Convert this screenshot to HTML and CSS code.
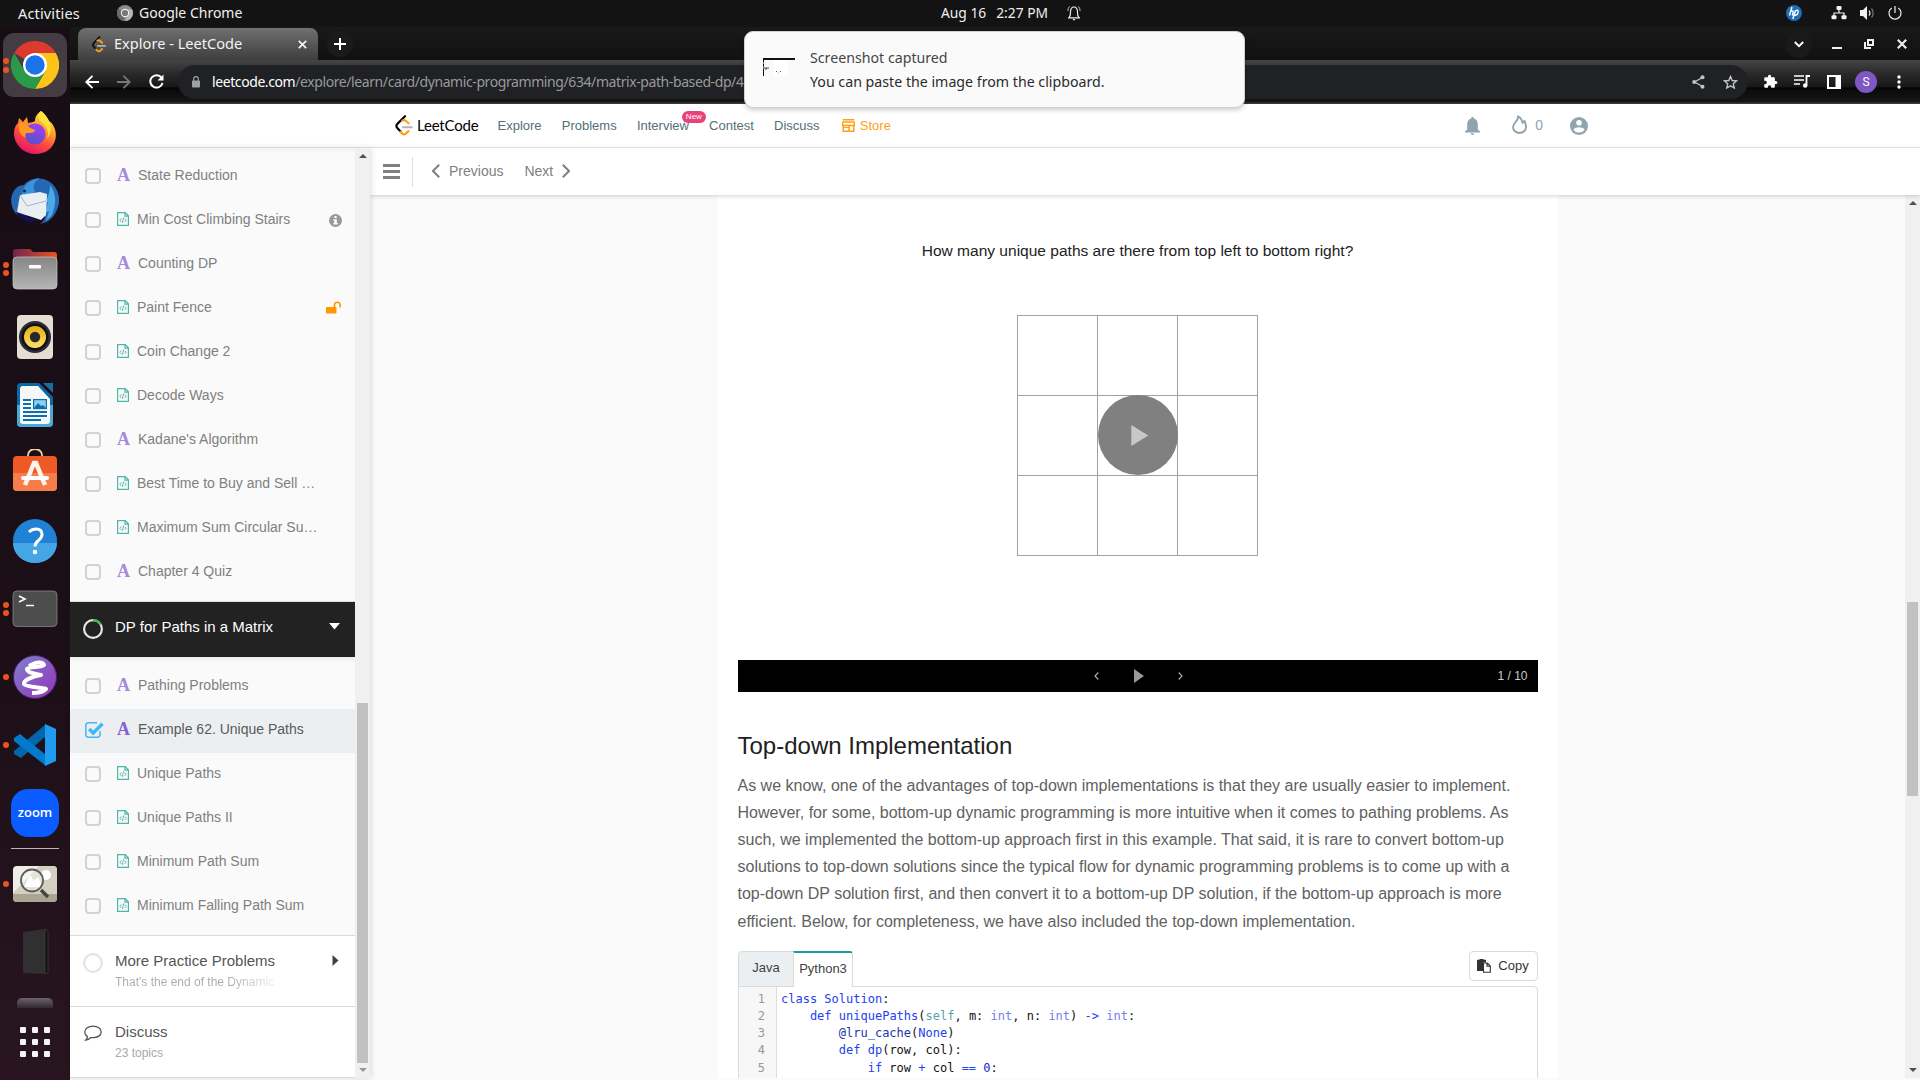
FILE: index.html
```html
<!DOCTYPE html>
<html lang="en">
<head>
<meta charset="utf-8">
<title>Explore - LeetCode</title>
<link rel="stylesheet" href="styles.css">
</head>
<body>
<svg class="defs" width="0" height="0">
  <defs>
    <symbol id="doc" viewBox="0 0 12 14"><path d="M.6.6h7.6l3.2 3.2v9.6H.6z M8 .8v3.4h3.2" fill="none" stroke="#4db6ac" stroke-width="1.2"/><path d="M4.400 6.400 2.800 8.200l1.600 1.800M7.600 6.400l1.600 1.800-1.600 1.800M6.600 5.400 5.400 11" fill="none" stroke="#4db6ac" stroke-width=".9"/></symbol>
  </defs>
</svg>
<header class="topbar">
  <div class="topbar-left">
    <span class="activities">Activities</span>
    <svg width="16" height="16" viewBox="0 0 16 16"><circle cx="8" cy="8" r="8" fill="#8b8b8b"/><path d="M8 8 1 4A8 8 0 0 0 7 16z" fill="#686868"/><path d="M8 4.2h7A8 8 0 0 1 8 16l3-6z" fill="#b5b5b5"/><circle cx="8" cy="8" r="4.2" fill="#eee"/><circle cx="8" cy="8" r="3.1" fill="#777"/></svg>
    <span class="appname">Google Chrome</span>
  </div>
  <div class="clock"><span>Aug 16</span><span>2:27 PM</span>
    <svg width="14" height="16" viewBox="0 0 14 16"><path d="M2.2 12.4c1.3-1.2 1.3-2.6 1.3-5.2C3.500 4 4.700 2 7 2s3.500 2 3.500 5.200c0 2.600 0 4 1.300 5.200M1 12.800h12" fill="none" stroke="#eee" stroke-width="1.200"/><path d="M5.500 14h3L7 15.800z" fill="#eee"/><path d="M2.600 1.400C1.400 2.600 1 4 1 6M11.400 1.400C12.600 2.600 13 4 13 6" fill="none" stroke="#ccc" stroke-width="1"/></svg>
  </div>
  <div class="tray">
    <svg class="t-hp" width="16" height="16" viewBox="0 0 16 16"><circle cx="8" cy="8" r="8" fill="#1d6fb5"/><path d="M6 2 3.400 10.500M4.800 6.500c2-1.200 2.800-.6 2.300 1L6.200 10.500M9.500 5.500 6.800 14M9.300 6c2.400-1.400 3.400-.8 2.700 1.600-.6 2.200-1.500 3-3.700 2.600" fill="none" stroke="#fff" stroke-width="1.400"/></svg>
    <svg class="t-net" width="16" height="14" viewBox="0 0 16 14"><path d="M8 3v4M3 10V7h10v3" fill="none" stroke="#f2f2f2" stroke-width="1.200"/><rect x="5.500" y="0" width="5" height="4" rx="1" fill="#f2f2f2"/><rect x=".5" y="9.200" width="5" height="4" rx="1" fill="#f2f2f2"/><rect x="10.500" y="9.200" width="5" height="4" rx="1" fill="#f2f2f2"/></svg>
    <svg class="t-vol" width="15" height="14" viewBox="0 0 15 14"><path d="M0 4h3l4-4v14L3 10H0z" fill="#f2f2f2"/><path d="M9 4.500c1.200 1.500 1.200 3.500 0 5" fill="none" stroke="#f2f2f2" stroke-width="1.200"/><path d="M11.500 2.500c2.200 2.500 2.200 6.500 0 9" fill="none" stroke="#777" stroke-width="1.200"/></svg>
    <svg class="t-pow" width="14" height="14" viewBox="0 0 14 14"><path d="M3.800 2A6 6 0 1 0 10.200 2M7 0v7" fill="none" stroke="#eee" stroke-width="1.200"/></svg>
  </div>
</header>
<div class="desktop">
  <nav class="dock">
    <div class="cell on two"><svg width="48" height="48" viewBox="0 0 48 48"><path d="M24 24 3.200 12A24 24 0 0 1 44.800 12z" fill="#dc3a2e"/><path d="M24 12h20.800A24 24 0 0 1 24 48l10.400-18z" fill="#fcc419"/><path d="M13.600 30 3.200 12A24 24 0 0 0 24 48l10.400-18z" fill="#2b9a48"/><circle cx="24" cy="24" r="12" fill="#fff"/><circle cx="24" cy="24" r="9.700" fill="#1a73e8"/></svg></div>
    <div class="cell"><svg width="48" height="48" viewBox="0 0 48 48"><defs><linearGradient id="ff" x1=".8" y1="0" x2=".3" y2="1"><stop offset="0" stop-color="#fff44f"/><stop offset=".35" stop-color="#ffa52a"/><stop offset=".65" stop-color="#ff4a3c"/><stop offset="1" stop-color="#e3116e"/></linearGradient><linearGradient id="ff2" x1=".7" y1="0" x2=".3" y2="1"><stop offset="0" stop-color="#a43df5"/><stop offset="1" stop-color="#5552c8"/></linearGradient></defs><path d="M30 2c4 3 6 6 8 10 5 3 8 11 6.500 18C42 40 34 45 24 45S4 37 3 26c0-6 1-9 4-12l1-5 4 4 4-5 1 6c5-1 6-1 7-2 0-5 3-8 6-10z" fill="url(#ff)"/><circle cx="24" cy="25" r="10.500" fill="url(#ff2)"/><path d="M8 15c6-3 9 4 16 6 0 3-5 3-8 3-2 0-2 3-1 5-5-2-8-7-7-14z" fill="#ff9a22"/><path d="M30 2c-3 3-3 7-1 10 6 4 10 9 7 18 5-6 4-13 2-18-2-4-4-7-8-10z" fill="#ffe23c"/></svg></div>
    <div class="cell"><svg width="48" height="48" viewBox="0 0 48 48"><path d="M13 8C18 1 30-1 39 5c8 6 11 16 8 25-3 10-9 15-18 17 4-3 5-5 5-8L6 38C-3 28-1 14 8 9z" fill="#2467b3"/><path d="M12 13c3-8 10-11 17-12-8 5-7 10-5 14l-9 5-5 2z" fill="#3b93dc"/><path d="M39 8c6 8 7 18 2 30l-6 6 3-10-4 2 3-11-4 2c4-6 6-12 6-19z" fill="#4da8e6"/><path d="m9 18 20-3 7 2-1 21-5 5L6 35z" fill="#e9eef3"/><path d="m9 18 7 11 19-5" fill="none" stroke="#a9b3bf"/><path d="m5 35 22 8-7 3L7 40z" fill="#16104c"/><circle cx="13.500" cy="14" r="1.500" fill="#072b54"/></svg></div>
    <div class="cell two"><svg width="48" height="48" viewBox="0 0 48 48"><defs><linearGradient id="fo"><stop offset="0" stop-color="#6f2450"/><stop offset="1" stop-color="#e95420"/></linearGradient><linearGradient id="gr" x2="0" y2="1"><stop offset="0" stop-color="#858585"/><stop offset="1" stop-color="#b5b5b5"/></linearGradient></defs><path d="M2 15V7q0-3 3-3h13q2 0 4 3h21q3 0 3 3v10H2z" fill="url(#fo)"/><rect x="2" y="12" width="44" height="32" rx="4" fill="url(#gr)" stroke="#c8c8c8" stroke-width=".7"/><rect x="18" y="20" width="12" height="3.500" rx="1" fill="#fff"/></svg></div>
    <div class="cell"><svg width="48" height="48" viewBox="0 0 48 48"><defs><linearGradient id="sp" x2="0" y2="1"><stop offset="0" stop-color="#e6ae13"/><stop offset="1" stop-color="#ffe268"/></linearGradient></defs><rect x="6" y="2" width="36" height="44" rx="4" fill="#e3ddd2"/><circle cx="24" cy="24" r="16" fill="#2b2c36"/><circle cx="24" cy="24" r="13.500" fill="#111"/><circle cx="24" cy="24" r="11" fill="url(#sp)"/><circle cx="24" cy="24" r="5.200" fill="#28292c"/></svg></div>
    <div class="cell"><svg width="48" height="48" viewBox="0 0 48 48"><path d="M10 2h18l14 14v26q0 4-4 4H10q-4 0-4-4V6q0-4 4-4z" fill="#0c669f"/><path d="M6 24h36v18q0 4-4 4H10q-4 0-4-4z" fill="#4ba9d6"/><path d="M32 2h10v10z" fill="#176d9f"/><path d="M12 5h15l12 13v22q0 3-3 3H12q-3 0-3-3V8q0-3 3-3z" fill="#f7f8fa"/><path d="M12 19h8M12 23h8M12 27h8M12 31h24M12 35h24M12 39h18" stroke="#0b70ab" stroke-width="2.200"/><rect x="22.600" y="18.600" width="12.800" height="9" fill="#90cef1" stroke="#0b70ab" stroke-width="1.200"/><path d="m23 27 4-5 3 3 2-1 3 3z" fill="#0b70ab"/></svg></div>
    <div class="cell"><svg width="48" height="48" viewBox="0 0 48 48"><path d="M17 9V6a7 6 0 0 1 14 0v3" fill="none" stroke="#efd2a1" stroke-width="1.800"/><rect x="2" y="7" width="44" height="35" rx="4" fill="#ee5a25"/><path d="M2 24h44v14q0 4-4 4H6q-4 0-4-4z" fill="#f47d4a"/><path d="m14 36 9-22h2l9 22" fill="none" stroke="#fff3ec" stroke-width="4.500"/><path d="M12 29h24" stroke="#fff" stroke-width="4" stroke-linecap="round"/></svg></div>
    <div class="cell"><svg width="48" height="48" viewBox="0 0 48 48"><circle cx="24" cy="24" r="22" fill="#1f82d4"/><path d="M2 26a22 20 0 0 0 44 0z" fill="#45a5e5"/><path d="M18 15q3-3 7-3c4 0 6 2 6 5.500 0 6-7 5.500-7 12" fill="none" stroke="#fff" stroke-width="3"/><circle cx="24" cy="35" r="2.300" fill="#fff"/></svg></div>
    <div class="cell two"><svg width="48" height="48" viewBox="0 0 48 48"><rect x="2" y="6" width="44" height="35.500" rx="4" fill="#4d4d4d" stroke="#858585" stroke-width=".8"/><path d="m8 11 6 3-6 3M15 20.500h8" fill="none" stroke="#fff" stroke-width="1.600"/></svg></div>
    <div class="cell one"><svg width="48" height="48" viewBox="0 0 48 48"><defs><linearGradient id="em" x2="1" y2="1"><stop offset="0" stop-color="#8080cf"/><stop offset="1" stop-color="#9334b6"/></linearGradient></defs><circle cx="24" cy="24" r="21.500" fill="url(#em)" stroke="#492063"/><path d="M18 13c8-5 14-4 15-1-2 3-16 1-17 4 0 4 10 5 14 6-7 1-18 5-17 9 1 3 21 4 22 5-3 3-9 4-14 4" fill="none" stroke="#fff" stroke-width="4" stroke-linejoin="round"/></svg></div>
    <div class="cell one"><svg width="48" height="48" viewBox="0 0 48 48"><path d="m3 33 7 4 25-22V3L3 30z" fill="#0065a9"/><path d="m3 17 6-4 26 21v11L3 20z" fill="#007acc"/><path d="M34 3l11 5v32l-11 5z" fill="#1f9cf0"/></svg></div>
    <div class="cell"><div class="zoomapp">zoom</div></div>
    <div class="dock-sep"></div>
    <div class="cell one"><svg width="48" height="48" viewBox="0 0 48 48"><rect x="2" y="6" width="44" height="36" rx="4" fill="#efeee6"/><path d="M2 33 28 6h14q4 0 4 4v24H2z" fill="#d2d0c1"/><path d="M2 34h44v4q0 4-4 4H6q-4 0-4-4z" fill="#aaa493"/><circle cx="35" cy="15" r="5" fill="#fff"/><path d="m13 27 6-12 4 6 4-4 5 10z" fill="#fff"/><circle cx="21" cy="20.500" r="11" fill="#fff" fill-opacity=".4" stroke="#5c5c5c" stroke-width="1.800"/><path d="m30 30 7 7" stroke="#444" stroke-width="3.500"/></svg></div>
    <div class="cell"><svg width="48" height="48" viewBox="0 0 48 48"><path d="m12 4 22-3v45l-22-1z" fill="#303030"/><path d="m34 1 3 2v42l-3 1z" fill="#111" stroke="#444" stroke-width=".7"/></svg></div>
    <div class="half-icon"></div>
    <div class="apps"><i></i><i></i><i></i><i></i><i></i><i></i><i></i><i></i><i></i></div>
  </nav>
  <div class="window">
    <div class="tabstrip">
      <div class="tab">
        <svg width="14" height="17" viewBox="0 0 18 21"><path d="M9.500 1 2.500 8.500q-2.500 2.500 0 5l3 3.200" fill="none" stroke="#111" stroke-width="2.400" stroke-linecap="round"/><path d="m7 5.500q2-1 3.500.5L13 8.300M5.500 17l1.300 1.400q2 1.600 4 0L13 16.200" fill="none" stroke="#ffa116" stroke-width="2.400" stroke-linecap="round"/><path d="M7.500 12.300H17" stroke="#b3b3b3" stroke-width="2" stroke-linecap="round"/></svg>
        <span>Explore - LeetCode</span>
        <svg width="9" height="9" viewBox="0 0 9 9"><path d="m.8.8 7.400 7.400M8.200.8.800 8.200" stroke="#f4f4f4" stroke-width="1.700"/></svg>
      </div>
      <div class="plus"><svg width="12" height="12" viewBox="0 0 12 12"><path d="M6 0v12M0 6h12" stroke="#fff" stroke-width="2"/></svg></div>
      <div class="winbtns">
        <div class="chev"><svg width="10" height="7" viewBox="0 0 10 7"><path d="m.8 1 4.200 4.200L9.200 1" fill="none" stroke="#fff" stroke-width="1.800"/></svg></div>
        <svg class="w-min" width="10" height="10" viewBox="0 0 10 10"><path d="M0 9h10" stroke="#eee" stroke-width="2"/></svg>
        <svg class="w-max" width="10" height="10" viewBox="0 0 10 10"><path d="M4 1h5v5H4zM1 3v6h6" fill="none" stroke="#eee" stroke-width="2"/></svg>
        <svg class="w-close" width="10" height="10" viewBox="0 0 10 10"><path d="m.8.8 8.400 8.400M9.200.8.800 9.200" stroke="#eee" stroke-width="2.200"/></svg>
      </div>
    </div>
    <div class="toolbar">
      <svg class="b-back" width="14" height="14" viewBox="0 0 14 14"><path d="M7.500.8 1.300 7l6.200 6.200M1.300 7H14" fill="none" stroke="#fff" stroke-width="1.900"/></svg>
      <svg class="b-fwd" width="14" height="14" viewBox="0 0 14 14"><path d="M6.500.8 12.700 7l-6.200 6.200M12.700 7H0" fill="none" stroke="#777" stroke-width="1.900"/></svg>
      <svg class="b-rel" width="15" height="15" viewBox="0 0 15 15"><path d="M12.500 3.700A6.200 6.200 0 1 0 13.500 9" fill="none" stroke="#fff" stroke-width="2"/><path d="M14.500.5v6h-6z" fill="#fff"/></svg>
      <div class="omnibox">
        <svg width="8" height="12" viewBox="0 0 8 12"><rect y="4.500" width="8" height="7" rx=".8" fill="#9aa0a6"/><path d="M1.700 5V3a2.300 2.300 0 0 1 4.600 0v2" fill="none" stroke="#9aa0a6" stroke-width="1.200"/></svg>
        <span class="url"><b>leetcode.com</b>/explore/learn/card/dynamic-programming/634/matrix-path-based-dp/4</span>
        <svg class="o-share" width="13" height="14" viewBox="0 0 13 14"><path d="m10.500 2.500-8 4.500 8 4.500" fill="none" stroke="#c4c4c4" stroke-width="1.300"/><circle cx="10.500" cy="2.300" r="2" fill="#c4c4c4"/><circle cx="2.200" cy="7" r="2" fill="#c4c4c4"/><circle cx="10.500" cy="11.700" r="2" fill="#c4c4c4"/></svg>
        <svg width="15" height="14" viewBox="0 0 15 14"><path d="m7.500 1.500 1.700 4 4.400.4-3.300 2.900 1 4.200-3.800-2.200L3.700 13l1-4.200L1.400 5.900l4.400-.4z" fill="none" stroke="#c4c4c4" stroke-width="1.400"/></svg>
      </div>
      <svg class="x-puz" width="15" height="15" viewBox="0 0 24 24"><path d="M20.500 11H19V7c0-1.100-.9-2-2-2h-4V3.500a2.500 2.500 0 0 0-5 0V5H4c-1.100 0-2 .9-2 2v3.800h1.500a2.700 2.700 0 0 1 0 5.400H2V20c0 1.100.9 2 2 2h3.800v-1.500a2.700 2.700 0 0 1 5.400 0V22H17c1.100 0 2-.9 2-2v-4h1.500a2.500 2.500 0 0 0 0-5z" fill="#fff"/></svg>
      <svg class="x-que" width="16" height="13" viewBox="0 0 16 13"><path d="M0 1h10M0 5h10M0 9h6" stroke="#fff" stroke-width="1.700"/><path d="M12.500 10.500V1H16" fill="none" stroke="#fff" stroke-width="1.800"/><circle cx="11.200" cy="10.500" r="2.200" fill="#fff"/></svg>
      <svg class="x-pan" width="14" height="14" viewBox="0 0 14 14"><path d="M0 0h14v14H0zM2 2v10h6.500V2z" fill="#fff" fill-rule="evenodd"/></svg>
      <span class="avatar">S</span>
      <svg class="x-dot" width="4" height="14" viewBox="0 0 4 14"><circle cx="2" cy="2" r="1.700" fill="#fff"/><circle cx="2" cy="7" r="1.700" fill="#fff"/><circle cx="2" cy="12" r="1.700" fill="#fff"/></svg>
    </div>
    <div class="page">
      <header class="site">
        <svg class="logo" width="18" height="21" viewBox="0 0 18 21"><path d="M10 1.200 2.500 8.800q-2.200 2.200 0 4.400l3.300 3.600" fill="none" stroke="#000" stroke-width="2.200" stroke-linecap="round"/><path d="M7.500 5.500q2-1 3.500.5l2.500 2.300M5.500 16.800l1.500 1.600q2 1.800 4 0l2.500-2.200" fill="none" stroke="#ffa116" stroke-width="2.200" stroke-linecap="round"/><path d="M8 12.300h8.800" stroke="#b3b3b3" stroke-width="1.900" stroke-linecap="round"/></svg>
        <span class="wordmark">LeetCode</span>
        <nav class="menu">
          <a>Explore</a><a>Problems</a><a class="iv">Interview<em>New</em></a><a>Contest</a><a>Discuss</a>
          <a class="store"><svg width="13" height="13" viewBox="0 0 13 13"><path d="M.8.8h11.400M1 3h11l.5 3.600H.5zM1.200 6.500v5.700h10.600V6.500M7 6.500v5.500" fill="none" stroke="#ffa116" stroke-width="1.500"/><path d="M1 8.500h6" stroke="#ffa116"/></svg>Store</a>
        </nav>
        <div class="user">
          <svg class="u-bell" width="15" height="18" viewBox="0 0 15 18"><path d="M7.500 0c.8 0 1.300.5 1.300 1.400C11.500 2 12.800 4.200 12.800 7v5.500L15 14.500v1H0v-1l2.200-2V7c0-2.800 1.300-5 4-5.600C6.200.5 6.700 0 7.500 0zM5.800 16.300h3.400a1.700 1.700 0 0 1-3.400 0z" fill="#90a4ae"/></svg>
          <svg class="u-fire" width="15" height="19" viewBox="0 0 15 19"><path d="M6 1.300c.3 2.500-.8 4-2.500 5.800C2 8.800 1 10.200 1 12.200 1 15.500 4 18 7.500 18s6.500-2.500 6.500-6c0-2.500-.8-4.500-1.600-6.300-.4 1.200-1 1.800-2 2C10 4.600 8.500 2.600 6 1.300z" fill="none" stroke="#90a4ae" stroke-width="1.900" stroke-linejoin="round"/></svg>
          <span>0</span>
          <svg class="u-acc" width="18" height="18" viewBox="0 0 18 18"><circle cx="9" cy="9" r="9" fill="#90a4ae"/><circle cx="9" cy="5.700" r="2.800" fill="#fff"/><path d="M3.300 12.700C4.500 11 7 10.300 9 10.300s4.500.7 5.700 2.400A6.700 6.700 0 0 1 9 15.500a6.700 6.700 0 0 1-5.700-2.800z" fill="#fff"/></svg>
        </div>
      </header>
      <div class="body">
        <aside class="sidebar">
          <div class="list">
            <div class="items first">
              <div class="row"><i class="cb"></i><b>A</b><span>State Reduction</span></div>
              <div class="row"><i class="cb"></i><svg class="doc"><use href="#doc"/></svg><span>Min Cost Climbing Stairs</span><svg class="info" width="13" height="13" viewBox="0 0 13 13"><circle cx="6.500" cy="6.500" r="6.500" fill="#999"/><path d="M5.400 2h2.300v2H5.400zM4.300 5.200h3.500v3.800h1v1.500H4.300V9h1V6.600h-1z" fill="#fff"/></svg></div>
              <div class="row"><i class="cb"></i><b>A</b><span>Counting DP</span></div>
              <div class="row"><i class="cb"></i><svg class="doc"><use href="#doc"/></svg><span>Paint Fence</span><svg class="lock" width="15" height="13" viewBox="0 0 15 13"><rect y="6" width="10.500" height="6.500" rx=".8" fill="#ff9800"/><path d="M8.500 6.500V4a2.800 2.800 0 0 1 5.600 0v2.500" fill="none" stroke="#ff9800" stroke-width="1.600"/></svg></div>
              <div class="row"><i class="cb"></i><svg class="doc"><use href="#doc"/></svg><span>Coin Change 2</span></div>
              <div class="row"><i class="cb"></i><svg class="doc"><use href="#doc"/></svg><span>Decode Ways</span></div>
              <div class="row"><i class="cb"></i><b>A</b><span>Kadane's Algorithm</span></div>
              <div class="row"><i class="cb"></i><svg class="doc"><use href="#doc"/></svg><span>Best Time to Buy and Sell …</span></div>
              <div class="row"><i class="cb"></i><svg class="doc"><use href="#doc"/></svg><span>Maximum Sum Circular Su…</span></div>
              <div class="row"><i class="cb"></i><b>A</b><span>Chapter 4 Quiz</span></div>
            </div>
            <div class="chapter">
              <svg width="20" height="20" viewBox="0 0 20 20"><circle cx="10" cy="10" r="8.900" fill="none" stroke="#e6e6e6" stroke-width="2.200"/><path d="M10 1.100A8.900 8.900 0 0 1 17.700 5.500" fill="none" stroke="#4caf50" stroke-width="2.200"/></svg>
              <span>DP for Paths in a Matrix</span>
              <svg class="caret" width="11" height="7" viewBox="0 0 11 7"><path d="M0 0h11L5.500 6.500z" fill="#fff"/></svg>
            </div>
            <div class="items second">
              <div class="row"><i class="cb"></i><b>A</b><span>Pathing Problems</span></div>
              <div class="row active"><svg class="checked" width="19" height="16" viewBox="0 0 19 16"><path d="M15 9v3.500q0 2.700-2.700 2.700H3.500Q.8 15.200.8 12.500v-9Q.8.800 3.500.8H12" fill="none" stroke="#40b8f8" stroke-width="1.500"/><path d="m4.200 7 4 4L17.500 1.800" fill="none" stroke="#40b8f8" stroke-width="3.400"/></svg><b>A</b><span>Example 62. Unique Paths</span></div>
              <div class="row"><i class="cb"></i><svg class="doc"><use href="#doc"/></svg><span>Unique Paths</span></div>
              <div class="row"><i class="cb"></i><svg class="doc"><use href="#doc"/></svg><span>Unique Paths II</span></div>
              <div class="row"><i class="cb"></i><svg class="doc"><use href="#doc"/></svg><span>Minimum Path Sum</span></div>
              <div class="row"><i class="cb"></i><svg class="doc"><use href="#doc"/></svg><span>Minimum Falling Path Sum</span></div>
            </div>
            <div class="entry">
              <svg width="20" height="20" viewBox="0 0 20 20"><circle cx="10" cy="10" r="8.900" fill="none" stroke="#e4e4e4" stroke-width="2.200"/></svg>
              <div class="txt"><h4>More Practice Problems</h4><p class="fade">That's the end of the Dynamic</p></div>
              <svg class="caret" width="7" height="11" viewBox="0 0 7 11"><path d="M.5 0v11L6.500 5.500z" fill="#424242"/></svg>
            </div>
            <div class="entry">
              <svg width="20" height="17" viewBox="0 0 20 17"><path d="M10 1.200c4.700 0 8.200 2.400 8.200 5.800s-3.500 5.700-8.200 5.700c-.8 0-1.500 0-2.200-.2-1.400 1.500-3.200 2.400-5 2.500 1-.9 1.500-2 1.600-3.400C2.600 10.500 1.800 8.900 1.800 7c0-3.400 3.500-5.800 8.200-5.800z" fill="none" stroke="#555" stroke-width="1.300" transform="translate(0 1)"/></svg>
              <div class="txt"><h4>Discuss</h4><p>23 topics</p></div>
            </div>
          </div>
          <div class="scroll s1"><i class="up"></i><div class="thumb"></div><i class="down grey"></i></div>
        </aside>
        <main class="main">
          <div class="subbar">
            <svg width="17" height="15" viewBox="0 0 17 15"><path d="M0 1.500h17M0 7.500h17M0 13.500h17" stroke="#808080" stroke-width="2.800"/></svg>
            <i class="vr"></i>
            <svg class="p-prev" width="8" height="14" viewBox="0 0 8 14"><path d="M7.200.7 1 7l6.200 6.300" fill="none" stroke="#808080" stroke-width="2"/></svg>
            <span class="prev">Previous</span><span class="next">Next</span>
            <svg class="p-next" width="8" height="14" viewBox="0 0 8 14"><path d="M.8.700 7 7 .8 13.300" fill="none" stroke="#808080" stroke-width="2"/></svg>
          </div>
          <div class="viewport">
            <article class="article">
              <div class="slide">
                <p>How many unique paths are there from top left to bottom right?</p>
                <svg width="242" height="242" viewBox="0 0 242 242"><path d="M0 .5h241M0 80.500h241M0 160.500h241M0 240.500h241M.5 0v241M80.500 0v241M160.500 0v241M240.500 0v241" stroke="#a0a0a0" fill="none"/><circle cx="121" cy="120" r="40" fill="#808080"/><path d="M114.300 110v21l17-10.500z" fill="#c8c8c8"/></svg>
              </div>
              <div class="controls">
                <span></span>
                <div class="keys">
                  <svg width="5" height="8" viewBox="0 0 5 8"><path d="M4.300.5 1 4l3.300 3.500" fill="none" stroke="#aaa" stroke-width="1.200"/></svg>
                  <svg width="10" height="14" viewBox="0 0 10 14"><path d="M0 0v14l10-7z" fill="#999"/></svg>
                  <svg width="5" height="8" viewBox="0 0 5 8"><path d="M.7.500 4 4 .7 7.500" fill="none" stroke="#aaa" stroke-width="1.200"/></svg>
                </div>
                <span class="count">1 / 10</span>
              </div>
              <h2>Top-down Implementation</h2>
              <p class="prose">As we know, one of the advantages of top-down implementations is that they are usually easier to implement. However, for some, bottom-up dynamic programming is more intuitive when it comes to pathing problems. As such, we implemented the bottom-up approach first in this example. That said, it is rare to convert bottom-up solutions to top-down solutions since the typical flow for dynamic programming problems is to come up with a top-down DP solution first, and then convert it to a bottom-up DP solution, if the bottom-up approach is more efficient. Below, for completeness, we have also included the top-down implementation.</p>
              <div class="langs">
                <span class="lang">Java</span><span class="lang cur">Python3</span>
                <button class="copy"><svg width="14" height="14" viewBox="0 0 14 14"><path d="M0 .8h2.500V0h4v.8H9v2.700H6V12H0z" fill="#333"/><path d="M6.500 4h3.800l3 3v6.300H6.500z M10 4.200v3h3" fill="#fff" stroke="#333" stroke-width="1.100"/></svg>Copy</button>
              </div>
              <div class="code">
                <div class="nums"><div>1</div><div>2</div><div>3</div><div>4</div><div>5</div></div>
                <div class="lines">
                  <div><span class="k">class</span> <span class="k">Solution</span>:</div>
                  <div class="in1"><span class="k">def</span> <span class="k">uniquePaths</span>(<span class="s">self</span>, m: <span class="t">int</span>, n: <span class="t">int</span>) <span class="k">-&gt;</span> <span class="t">int</span>:</div>
                  <div class="in2"><span class="d">@lru_cache</span>(<span class="k">None</span>)</div>
                  <div class="in2"><span class="k">def</span> <span class="k">dp</span>(row, col):</div>
                  <div class="in3"><span class="k">if</span> row <span class="k">+</span> col <span class="k">==</span> <span class="n">0</span>:</div>
                </div>
              </div>
            </article>
            <div class="scroll s2"><i class="up"></i><div class="thumb"></div><i class="down"></i></div>
          </div>
        </main>
      </div>
    </div>
  </div>
</div>
<div class="toast">
  <svg width="32" height="18" viewBox="0 0 32 18"><path d="M0 0h32v2H0z" fill="#111"/><path d="M11 2h14v16H11z" fill="#fff"/><path d="M.5 2v16" stroke="#111"/><path d="M.5 4v2" stroke="#d60"/><path d="M.5 8v3" stroke="#27b"/><path d="M1 10h5M2 11h2" stroke="#444"/><path d="M13 13.500h1M17 13.500h1" stroke="#555"/><path d="M15 15h1" stroke="#e90"/></svg>
  <div><p class="t1">Screenshot captured</p><p>You can paste the image from the clipboard.</p></div>
</div>
</body>
</html>
```
FILE: styles.css
```css
* { box-sizing: border-box; }
body { margin: 0; width: 1920px; height: 1080px; overflow: hidden; display: flex; flex-direction: column; font-family: "Liberation Sans", Arial, sans-serif; background: #131313; }
p, h2, h4 { margin: 0; font-weight: normal; }
svg { display: block; flex: none; }
.defs { position: absolute; }
i { flex: none; }

/* system bar */
.topbar { height: 27px; flex: none; display: grid; grid-template-columns: 941px 1fr auto; align-items: center; color: #f0f0f0; font: 14px/24px "Noto Sans", sans-serif; background: #131313; padding-bottom: 2px; }
.topbar-left { display: flex; align-items: center; padding-left: 18px; }
.activities { width: 99px; font-size: 14.500px; letter-spacing: .15px; }
.appname { margin-left: 6px; }
.clock { display: flex; align-items: center; font-size: 13.800px; gap: 10px; }
.clock svg { margin-left: 9px; }
.tray { display: flex; align-items: center; padding-right: 18px; }
.t-net { margin-left: 29px; }
.t-vol { margin-left: 13px; }
.t-pow { margin-left: 13px; }

.desktop { flex: 1; display: flex; min-height: 0; }

/* dock */
.dock { width: 70px; flex: none; padding-top: 4px; background: linear-gradient(#170d15, #1c0f18 60%, #28151f); }
.cell { height: 68px; display: flex; align-items: center; justify-content: center; position: relative; }
.cell.on { background: #453b43; height: 64px; width: 64px; margin: 2px 3px; border-radius: 11px; }
.cell.one::before, .cell.two::before, .cell.two::after { content: ""; position: absolute; left: 3px; top: 31px; width: 6px; height: 6px; border-radius: 50%; background: #e95420; }
.cell.two::before { top: 27px; }
.cell.two::after { top: 35px; }
.cell.on::before { left: 0; top: 25px; }
.cell.on::after { left: 0; top: 34px; }
.zoomapp { width: 48px; height: 48px; border-radius: 17px; background: #0b5cff; color: #fff; text-align: center; font: 600 13px/46px "Open Sans", sans-serif; }
.dock-sep { height: 1px; margin: 1px 11px; background: #b9b5b8; }
.half-icon { width: 36px; height: 10px; margin: 12px 17px 0; border-radius: 5px 5px 0 0; background: linear-gradient(#6a626b, #332832); }
.apps { display: grid; grid-template-columns: repeat(3, 6px); gap: 6px; margin: 19px 20px 0; }
.apps i { height: 6px; border-radius: 1px; background: #f4f4f4; }

/* browser frame */
.window { flex: 1; display: flex; flex-direction: column; min-width: 0; }
.tabstrip { height: 33px; flex: none; display: flex; background: linear-gradient(#191919, #111); padding-left: 8px; font-family: "Noto Sans", sans-serif; }
.tab { width: 240px; margin-top: 1px; border-radius: 8px 8px 0 0; background: linear-gradient(#707070, #3e3e3e); display: flex; align-items: center; padding: 0 11px 0 14px; color: #f3f3f3; font-size: 14.600px; }
.tab span { flex: 1; margin: -2px 0 0 8px; white-space: nowrap; }
.plus { width: 27px; height: 27px; margin: 3px 0 0 8px; border-radius: 50%; background: #1a1a1a; display: flex; align-items: center; justify-content: center; }
.winbtns { margin-left: auto; display: flex; align-items: center; padding: 1px 13px 0 0; }
.chev { width: 27px; height: 27px; border-radius: 50%; background: #1a1a1a; display: flex; align-items: center; justify-content: center; }
.w-min { margin-left: 20px; }
.w-max { margin-left: 22px; }
.w-close { margin-left: 23px; }
.toolbar { height: 44px; flex: none; display: flex; align-items: center; padding: 0 19px 1px 15px; background: linear-gradient(#464646, #2c2c2c 12px, #171717 27px, #000 28px, #0a0a0a 29px, #161616 42px, #3a3a3a 43px); }
.b-fwd, .b-rel { margin-left: 18px; }
.omnibox { width: 1570px; height: 34px; margin-left: 14px; border-radius: 17px; background: #202124; display: flex; align-items: center; padding: 0 10px 0 14px; }
.url { flex: 1; margin-left: 12px; color: #9a9a9a; font: 14px "Noto Sans", sans-serif; letter-spacing: -.41px; white-space: nowrap; }
.url b { font-weight: normal; color: #fff; }
.o-share { margin-right: 18px; }
.x-puz { margin-left: 15px; }
.x-que { margin-left: 16px; }
.x-pan { margin-left: 17px; }
.avatar { width: 22px; height: 22px; margin-left: 14px; border-radius: 50%; background: #7e57c2; color: #fff; font: 12px/22px Roboto, sans-serif; text-align: center; }
.x-dot { margin-left: 20px; }

/* web page */
.page { height: 976px; display: flex; flex-direction: column; background: #fafafa; padding-bottom: 2px; }
.site { height: 44px; flex: none; background: #fff; border-bottom: 1px solid #e8e8e8; display: flex; align-items: center; padding-left: 325px; font-size: 13px; color: #546e7a; }
.logo { margin-top: -1px; }
.wordmark { width: 80.500px; margin: -1px 0 0 4px; color: #000; font: 15px Lato, sans-serif; letter-spacing: -.2px; }
.menu { display: flex; align-items: center; gap: 20.200px; margin-top: -1px; }
.iv { position: relative; }
.iv em { position: absolute; left: 45px; top: -7px; width: 24px; height: 12px; border-radius: 6px; background: #ec407a; color: #fff; font: 8px/12px "Liberation Sans", sans-serif; text-align: center; }
.store { display: flex; align-items: center; gap: 5px; margin-left: 2px; color: #ffa116; }
.user { margin-left: auto; display: flex; align-items: center; padding-right: 332px; font-size: 14px; color: #90a4ae; }
.user span { margin-top: -2px; }
.u-fire { margin: -2px 8px 0 32px; }
.u-acc { margin-left: 27px; }

.body { flex: 1; display: flex; min-height: 0; }
.sidebar { width: 300px; flex: none; display: flex; position: relative; z-index: 2; box-shadow: 1px 0 6px rgba(0, 0, 0, .14); }
.list { width: 285px; background: #fff; overflow: hidden; }
.items { background: #fafafa; color: #808080; font-size: 14px; }
.items.first { padding: 7px 0 6px; border-bottom: 1px solid #ddd; background: linear-gradient(#f1f1f1, #fafafa 5px); }
.items.second { padding: 8px 0 6px; background: linear-gradient(#ececec, #fafafa 5px); }
.row { height: 44px; display: flex; align-items: center; padding: 0 13px 4px 15px; white-space: nowrap; }
.row span { flex: 1; margin-left: 8px; line-height: 20px; }
.row b { width: 13px; margin-left: 16px; color: #a48add; font: bold 18px/20px "Liberation Serif", serif; }
.row.active { background: #eceff1; color: #5a5a5a; }
.row.active b { color: #8561cb; margin-left: 13px; }
.cb { width: 16px; height: 16px; margin-top: 2px; border: 2px solid #d2d2d2; border-radius: 4px; }
.checked { margin-top: 2px; }
.doc { width: 12px; height: 14px; margin-left: 16px; }
.info { margin-top: 3px; }
.lock { margin: 1px 1px 0 0; }
.chapter { height: 55px; background: #222; color: #fff; font-size: 15px; display: flex; align-items: center; padding: 0 15px 1px 13px; }
.chapter span { flex: 1; margin-left: 12px; padding-bottom: 6px; }
.chapter .caret { margin-top: -5px; }
.entry { height: 71px; border-top: 1px solid #dadada; display: flex; align-items: flex-start; padding: 17px 16px 0 13px; background: #fff; }
.entry:last-child { border-bottom: 1px solid #dadada; height: 72px; }
.entry .txt { flex: 1; margin: -1px 0 0 12px; }
.entry h4 { font-size: 15px; line-height: 18px; color: #555; }
.entry p { font-size: 12px; line-height: 16px; margin-top: 4px; color: #aaa; width: 160px; white-space: nowrap; }
.entry .fade { background: linear-gradient(90deg, #aaa 70%, #eee); background-clip: text; -webkit-background-clip: text; color: transparent; }
.entry .caret { margin-top: 2px; }

.scroll { width: 15px; flex: none; background: #f0f0f0; display: flex; flex-direction: column; align-items: center; }
.thumb { width: 11px; background: #c1c1c1; }
.up, .down { width: 0; height: 0; border: 4px solid transparent; }
.up { border-top: 0; border-bottom-color: #505050; margin-top: 6px; }
.down { border-bottom: 0; border-top-color: #505050; margin-top: auto; margin-bottom: 6px; }
.down.grey { border-top-color: #999; }
.s1 .thumb { height: 360px; margin-top: 545px; }
.s2 .thumb { height: 194px; margin-top: 397px; }

.main { flex: 1; display: flex; flex-direction: column; min-width: 0; }
.subbar { height: 47px; flex: none; position: relative; z-index: 1; background: #fff; box-shadow: 0 1px 4px rgba(0, 0, 0, .18); display: flex; align-items: center; padding-left: 13px; font-size: 14px; color: #808080; }
.vr { width: 1px; height: 30px; margin-left: 12px; background: #ddd; }
.p-prev { margin: -1px 9px 0 19px; }
.subbar span { margin-top: -1px; }
.next { margin-left: 21px; }
.p-next { margin: -1px 0 0 9px; }
.viewport { flex: 1; display: flex; justify-content: space-between; min-height: 0; overflow: hidden; }
.article { width: 840px; margin-left: 347.500px; padding: 0 20px; background: #fff; overflow: hidden; display: flex; flex-direction: column; }
.slide { height: 465px; flex: none; padding-top: 46px; display: flex; flex-direction: column; align-items: center; }
.slide p { font-size: 15.540px; line-height: 20px; color: #222; height: 74px; white-space: nowrap; }
.slide svg { margin-left: 1px; }
.controls { height: 32px; flex: none; background: #000; display: grid; grid-template-columns: 1fr auto 1fr; align-items: center; padding: 0 10px; }
.keys { display: flex; align-items: center; gap: 35px; margin-left: 1px; }
.keys svg:last-child { margin-left: -1px; }
.count { text-align: right; color: #ccc; font-size: 12px; }
h2 { margin-top: 39px; font-size: 24px; line-height: 30px; color: #212121; }
.prose { margin-top: 10.600px; font-size: 16px; line-height: 27.200px; color: #616161; }
.langs { height: 36px; flex: none; margin: 16.200px 0 -1px; display: flex; align-items: flex-start; font-size: 13px; color: #424242; }
.lang { height: 36px; width: 56px; padding-left: 1px; text-align: center; line-height: 32px; background: #eceff1; border: 1px solid #dadada; border-radius: 4px 0 0 0; }
.lang.cur { width: 60px; margin-left: -1px; line-height: 32px; background: #fff; border-top: 2px solid #1d9c9c; border-bottom: 0; border-radius: 0 3px 0 0; position: relative; z-index: 1; }
.copy { margin-left: auto; width: 69px; height: 30px; padding: 0 0 1px; border: 1px solid #dadada; border-radius: 4px; background: #fff; display: flex; align-items: center; justify-content: center; gap: 7px; font: 13px "Liberation Sans", sans-serif; color: #333; }
.code { height: 120px; flex: none; border: 1px solid #dadada; border-radius: 0 4px 0 0; display: flex; font: 12px/17.140px "DejaVu Sans Mono", monospace; }
.nums { width: 38.500px; padding: 4px 11px 0 0; text-align: right; color: #999; background: #f7f7f7; border-right: 1px solid #ddd; }
.lines { padding: 4px 0 0 4px; color: #111; white-space: nowrap; }
.in1 { padding-left: 4ch; }
.in2 { padding-left: 8ch; }
.in3 { padding-left: 12ch; }
.k { color: #2440f0; }
.s { color: #5a9fb0; }
.t { color: #7b7bf0; }
.d { color: #2233a8; }
.n { color: #2222cc; }

/* system notification */
.toast { position: absolute; left: 744px; top: 31px; width: 501px; height: 77px; border: 1px solid #cfcfcf; border-radius: 9px; background: #fafafa; box-shadow: 0 2px 5px rgba(0, 0, 0, .2); display: flex; align-items: center; padding: 0 0 0 18px; gap: 15px; z-index: 5; font: 14.200px/24px "Noto Sans", sans-serif; color: #2b2b2b; }
.toast svg { margin-top: -6px; }
.toast .t1 { color: #454545; }
```
